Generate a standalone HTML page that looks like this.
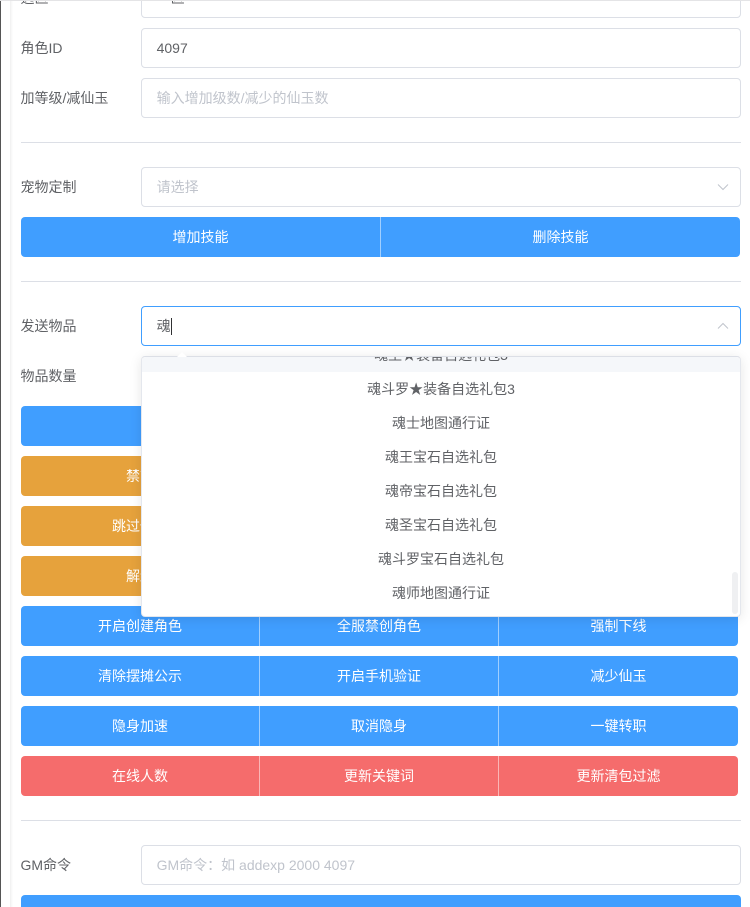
<!DOCTYPE html>
<html lang="zh-CN">
<head>
<meta charset="utf-8">
<title>GM</title>
<style>
html,body{margin:0;padding:0;background:#fff}
#p{position:relative;width:750px;height:907px;overflow:hidden;background:#fff;font-family:"Liberation Sans","Noto Sans CJK SC",sans-serif;font-size:14px;color:#606266}
#p div{box-sizing:border-box}
.a{position:absolute}
.l{position:absolute;left:20.5px;height:40px;line-height:40px;white-space:nowrap}
.i{position:absolute;left:141px;width:600px;height:40px;line-height:38px;border:1px solid #dcdfe6;border-radius:4px;padding-left:14.6px;background:#fff;white-space:nowrap}
.ph{color:#c0c4cc}
.hr{position:absolute;left:21px;width:720px;height:1px;background:#dcdfe6}
.b{position:absolute;left:21px;height:40px;display:flex;border-radius:4px;overflow:hidden;color:#fff;text-align:center;line-height:40px}
.b span{display:block;flex:1 1 0;white-space:nowrap;box-sizing:border-box}
.b span+span{border-left:1px solid rgba(255,255,255,.5)}
.w3{width:717px}
.w3 span:nth-child(1):not(:last-child){flex:0 0 238px}
.w3 span:nth-child(2){flex:0 0 239px}
.w3 span:nth-child(3){flex:0 0 240px}
.blue{background:#409eff}
.or{background:#e6a23c}
.red{background:#f56c6c}
.chev{position:absolute;left:717px;width:12px;height:8px}
#dd{position:absolute;left:141px;top:356px;width:600px;height:261px;background:#fff;border:1px solid #e4e7ed;border-top-color:#dcdfe6;border-radius:4px;box-shadow:0 2px 12px rgba(0,0,0,.1)}
#ls{position:absolute;left:0;top:0;width:598px;height:259px;overflow:hidden;border-radius:4px}
.o{position:absolute;left:0;width:598px;height:34px;line-height:34px;text-align:center;white-space:nowrap}
</style>
</head>
<body>
<div id="p">
  <div class="a" style="left:0;top:0;width:1px;height:907px;background:#555"></div>
  <div class="a" style="left:10px;top:0;width:3px;height:907px;background:linear-gradient(to right,#f0f0f0,#fff)"></div>

  <div class="l" style="top:-22px">选区</div>
  <div class="i" style="top:-22px">一区</div>
  <div class="a" style="left:0;top:0;width:750px;height:1px;background:#e4e4e6"></div>

  <div class="l" style="top:28px">角色ID</div>
  <div class="i" style="top:28px">4097</div>
  <div class="l" style="top:78px">加等级/减仙玉</div>
  <div class="i ph" style="top:78px">输入增加级数/减少的仙玉数</div>

  <div class="hr" style="top:142px"></div>

  <div class="l" style="top:167px">宠物定制</div>
  <div class="i ph" style="top:167px">请选择</div>
  <svg class="chev" style="top:183px" viewBox="0 0 12 8"><path d="M1 1.5 L6 6.5 L11 1.5" fill="none" stroke="#c0c4cc" stroke-width="1"/></svg>

  <div class="b blue" style="top:217px;width:719px"><span>增加技能</span><span>删除技能</span></div>

  <div class="hr" style="top:281px"></div>

  <div class="l" style="top:306px">发送物品</div>
  <div class="i" style="top:306px;border-color:#409eff">魂<span class="a" style="left:29px;top:11px;width:1px;height:17px;background:#303133"></span></div>
  <svg class="chev" style="top:322px" viewBox="0 0 12 8"><path d="M1 6.5 L6 1.5 L11 6.5" fill="none" stroke="#c0c4cc" stroke-width="1"/></svg>

  <div class="l" style="top:356px">物品数量</div>

  <div class="b blue w3" style="top:406px"><span>发送物品</span></div>
  <div class="b or w3" style="top:456px"><span>禁言</span><span>解除禁言</span><span>封号</span></div>
  <div class="b or w3" style="top:506px"><span>跳过任务</span><span>清空背包</span><span>踢下线</span></div>
  <div class="b or w3" style="top:556px"><span>解封</span><span>解除封号</span><span>重置</span></div>
  <div class="b blue w3" style="top:606px"><span>开启创建角色</span><span>全服禁创角色</span><span>强制下线</span></div>
  <div class="b blue w3" style="top:656px"><span>清除摆摊公示</span><span>开启手机验证</span><span>减少仙玉</span></div>
  <div class="b blue w3" style="top:706px"><span>隐身加速</span><span>取消隐身</span><span>一键转职</span></div>
  <div class="b red w3" style="top:756px"><span>在线人数</span><span>更新关键词</span><span>更新清包过滤</span></div>

  <div class="hr" style="top:820px"></div>

  <div class="l" style="top:845px">GM命令</div>
  <div class="i ph" style="top:845px">GM命令：如 addexp 2000 4097</div>
  <div class="b blue" style="top:895px;width:720px"></div>

  <div id="dd">
    <div class="a" style="left:34px;top:-5px;width:0;height:0;border-left:6px solid transparent;border-right:6px solid transparent;border-bottom:6px solid #fff"></div>
    <div id="ls">
      <div class="o" style="top:-19px;background:#f5f7fa">魂王★装备自选礼包3</div>
      <div class="o" style="top:15px">魂斗罗★装备自选礼包3</div>
      <div class="o" style="top:49px">魂士地图通行证</div>
      <div class="o" style="top:83px">魂王宝石自选礼包</div>
      <div class="o" style="top:117px">魂帝宝石自选礼包</div>
      <div class="o" style="top:151px">魂圣宝石自选礼包</div>
      <div class="o" style="top:185px">魂斗罗宝石自选礼包</div>
      <div class="o" style="top:219px">魂师地图通行证</div>
      <div class="a" style="left:590px;top:215px;width:6px;height:42px;background:#eff0f2;border-radius:3px"></div>
    </div>
  </div>
</div>
</body>
</html>
